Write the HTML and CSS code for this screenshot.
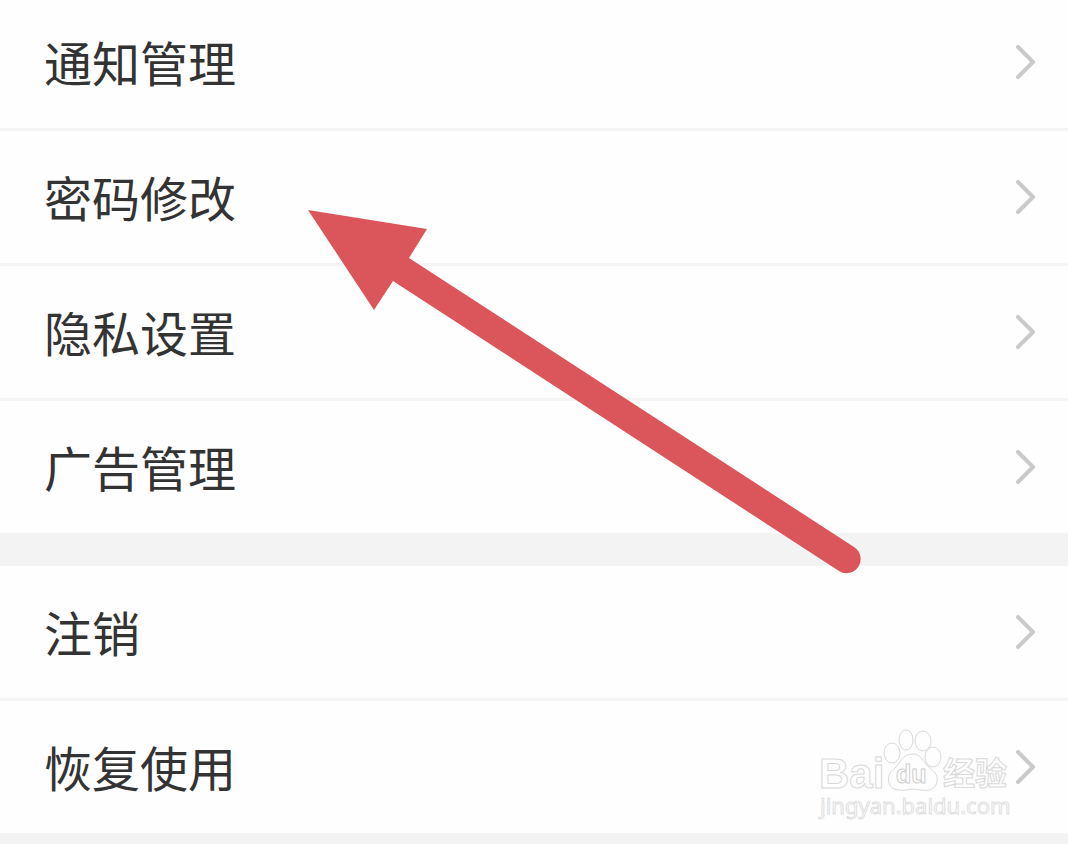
FILE: index.html
```html
<!DOCTYPE html>
<html lang="zh-CN">
<head>
<meta charset="utf-8">
<meta name="viewport" content="width=device-width, initial-scale=1">
<title>设置</title>
<link rel="stylesheet" href="styles.css">
</head>
<body>
<main class="settings">
  <nav class="group group-top">
    <a class="row" href="#notice"><span class="label">通知管理</span><svg class="chevron" viewBox="0 0 20 34" aria-hidden="true"><path d="M2 2 17 17 2 32"/></svg></a>
    <a class="row" href="#password"><span class="label">密码修改</span><svg class="chevron" viewBox="0 0 20 34" aria-hidden="true"><path d="M2 2 17 17 2 32"/></svg></a>
    <a class="row" href="#privacy"><span class="label">隐私设置</span><svg class="chevron" viewBox="0 0 20 34" aria-hidden="true"><path d="M2 2 17 17 2 32"/></svg></a>
    <a class="row" href="#ads"><span class="label">广告管理</span><svg class="chevron" viewBox="0 0 20 34" aria-hidden="true"><path d="M2 2 17 17 2 32"/></svg></a>
  </nav>
  <nav class="group">
    <a class="row" href="#cancel"><span class="label">注销</span><svg class="chevron" viewBox="0 0 20 34" aria-hidden="true"><path d="M2 2 17 17 2 32"/></svg></a>
    <a class="row" href="#restore"><span class="label">恢复使用</span><svg class="chevron" viewBox="0 0 20 34" aria-hidden="true"><path d="M2 2 17 17 2 32"/></svg></a>
  </nav>
  <svg class="arrow" viewBox="0 0 554 366" aria-hidden="true">
    <path d="M0 1 119 20 101 49 546 338A14 14 0 0 1 531 362L85 72 66 101Z"/>
  </svg>
  <svg class="watermark" viewBox="0 0 200 96">
    <g class="outline">
      <text class="brand" x="0" y="60">Bai</text>
      <ellipse cx="73" cy="25" rx="8" ry="10"/>
      <ellipse cx="87" cy="12" rx="7" ry="10"/>
      <ellipse cx="104" cy="13" rx="8" ry="10"/>
      <ellipse cx="114" cy="29" rx="8" ry="10"/>
      <path d="M94 26C83 26 81 36 75 41C66 47 68 62 80 62C87 63 89 61 95 61C103 62 112 65 117 57C121 48 115 43 110 39C104 34 102 26 94 26Z"/>
      <text class="du" x="77" y="55">du</text>
      <text class="cn" x="124" y="57">经验</text>
      <text class="url" x="1" y="86">jingyan.baidu.com</text>
    </g>
  </svg>
</main>
</body>
</html>
```
FILE: styles.css
```css
body {
  margin: 0;
  background: #f3f3f3;
  font-family: "Noto Sans", "Noto Sans CJK SC", sans-serif;
}

.settings {
  position: relative;
  display: flex;
  flex-direction: column;
  gap: 33px;
  padding-bottom: 11px;
  overflow: hidden;
}

.group {
  background: #fefefe;
}

.group-top {
  margin-top: -4px;
}

.row {
  display: flex;
  align-items: center;
  justify-content: space-between;
  height: 132px;
  padding: 0 32px 0 44px;
  color: #333;
  text-decoration: none;
}

.row + .row {
  border-top: 3px solid #f4f4f4;
}

.label {
  padding-bottom: 3px;
  font-family: "Noto Sans CJK SC", sans-serif;
  font-size: 48px;
  line-height: 72px;
}

.chevron {
  width: 20px;
  height: 34px;
  fill: none;
  stroke: #cacaca;
  stroke-width: 4px;
  stroke-linecap: round;
  stroke-linejoin: round;
}

.arrow {
  position: absolute;
  left: 308px;
  top: 209px;
  width: 554px;
  height: 366px;
  fill: #db565b;
}

.watermark {
  position: absolute;
  right: 49px;
  bottom: 20px;
  width: 200px;
  height: 96px;
  overflow: visible;
}

.outline {
  fill: #fefefe;
  stroke: #d9d9d9;
  stroke-width: 1px;
}

.brand {
  font: bold 42px "Liberation Sans", sans-serif;
}

.du {
  font: bold 25px "Liberation Sans", sans-serif;
  stroke: #cfcfcf;
}

.cn {
  font: bold 32px "Noto Sans CJK SC", sans-serif;
}

.url {
  font: 22px "Noto Sans", sans-serif;
  stroke: #dedede;
}
```
